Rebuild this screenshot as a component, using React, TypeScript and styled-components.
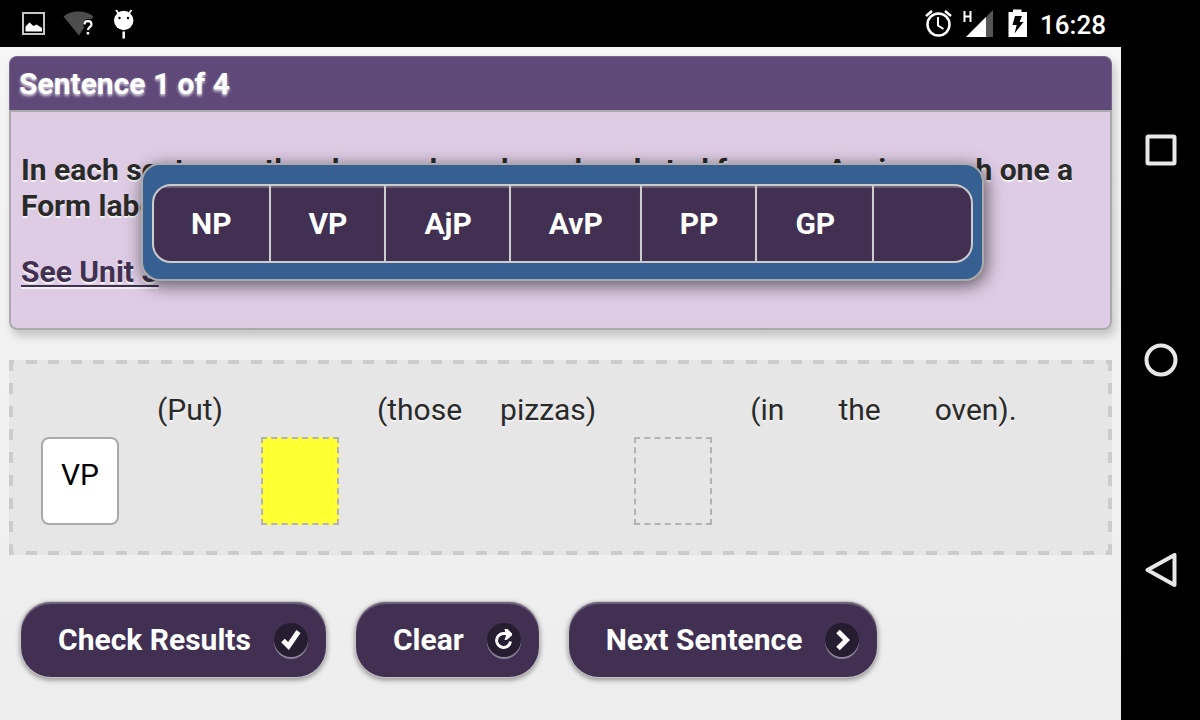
import React from "react";
import styled, { createGlobalStyle, css } from "styled-components";

const colors = {
  header: "#5f4979",
  panel: "#decce4",
  button: "#413051",
  blue: "#366092",
  line: "#cccccc",
  edge: "#aaaaaa",
};

const GlobalStyle = createGlobalStyle`
  * { box-sizing: border-box; }
  body {
    margin: 0;
    background: #000;
    font-family: Roboto, "Liberation Sans", sans-serif;
    font-size: 30px;
    line-height: 36px;
    color: #2a2a2a;
  }
  button { font: inherit; cursor: pointer; }
`;

const Device = styled.div`
  display: grid;
  grid-template-columns: minmax(0, 1fr) 79px;
  min-height: 100vh;
  background: #000;
`;

const Screen = styled.div`
  display: flex;
  flex-direction: column;
`;

const StatusBar = styled.header`
  display: flex;
  align-items: center;
  justify-content: space-between;
  height: 47px;
  padding: 0 15px 0 20px;
  color: #fff;
`;

const StatusGroup = styled.div`
  display: flex;
  align-items: center;
`;

const Clock = styled.time`
  margin-left: 10px;
  padding-top: 2px;
  font-size: 26px;
  font-weight: 500;
`;

const Page = styled.main`
  position: relative;
  flex: 1;
  padding: 9px 9px 40px;
  background: linear-gradient(#f6f6f6, #ededed);
`;

const Card = styled.section`
  border-radius: 8px;
  box-shadow: 3px 6px 10px rgba(0, 0, 0, 0.2);
`;

const CardTitle = styled.h1`
  margin: 0;
  padding: 9px 9px 8px;
  border: 1px solid #77658e;
  border-bottom: 0;
  border-radius: 8px 8px 0 0;
  background: ${colors.header};
  color: #fff;
  font-size: 30px;
  font-weight: 700;
  line-height: 36px;
  text-shadow: 0 2px 3px rgba(255, 255, 255, 0.8);
`;

const CardBody = styled.div`
  padding: 40px 10px 38px;
  border: 2px solid ${colors.edge};
  border-radius: 0 0 8px 8px;
  background: ${colors.panel};
  font-weight: 700;
  text-shadow: 0 2px 0 #f3f3f3;
`;

const Instructions = styled.p`
  margin: 0 0 30px;
`;

const UnitLink = styled.a`
  color: ${colors.button};
  text-decoration-thickness: 2px;
  text-underline-offset: 3px;
`;

const PopupFrame = styled.div`
  position: absolute;
  top: 116px;
  left: 141px;
  padding: 19px 9px 16px;
  border: 2px solid ${colors.edge};
  border-radius: 19px;
  background: ${colors.blue};
  box-shadow: 2px 4px 18px rgba(0, 0, 0, 0.6);
`;

const LabelGroup = styled.div`
  display: flex;
  overflow: hidden;
  border: 2px solid ${colors.line};
  border-radius: 19px;
  background: ${colors.button};
`;

const LabelButton = styled.button`
  min-width: 99px;
  height: 75px;
  padding: 0 37px 0 38px;
  border: 0;
  background: transparent;
  color: #fff;
  font-weight: 700;
  box-shadow: inset 0 2px 1px rgba(255, 255, 255, 0.25);

  & + & { border-left: 2px solid ${colors.line}; }
  &:first-child { padding-left: 37px; }
`;

const dashesX = `linear-gradient(90deg, ${colors.line} 5px, transparent 5px 17px, ${colors.line} 17px 28px, transparent 28px 39px, ${colors.line} 39px)`;
const dashesY = `linear-gradient(${colors.line} 11px, transparent 11px)`;

const SentenceBoard = styled.section`
  display: flex;
  align-items: flex-start;
  gap: 38px;
  min-height: 195px;
  margin-top: 30px;
  padding: 32px 32px 30px;
  background:
    ${dashesX} 0 0 / 45px 4px repeat-x,
    ${dashesX} 0 100% / 45px 4px repeat-x,
    ${dashesY} 0 0 / 4px 23px repeat-y,
    ${dashesY} 100% 0 / 4px 23px repeat-y,
    #e6e6e6;
`;

const Word = styled.span<{ $short?: boolean }>`
  padding-right: ${(p) => (p.$short ? 16 : 0)}px;
  text-shadow: 0 2px 0 #f3f3f3;
`;

const Slot = styled.button<{ $state: "filled" | "active" | "empty" }>`
  flex: none;
  width: 78px;
  height: 88px;
  margin-top: 45px;
  padding: 0 0 12px;
  border: 2px dashed #b3b3b3;
  background: transparent;
  color: #000;
  ${(p) => p.$state === "active" && css`background: #ffff33;`}
  ${(p) =>
    p.$state === "filled" &&
    css`
      border: 2px solid ${colors.edge};
      border-radius: 8px;
      background: #fff;
    `}
`;

const Actions = styled.div`
  display: flex;
  gap: 30px;
  padding: 47px 12px 0;
`;

const ActionButton = styled.button`
  display: flex;
  align-items: center;
  gap: 23px;
  height: 75px;
  padding: 0 18px 0 37px;
  border: 0;
  border-radius: 30px;
  background: ${colors.button};
  color: #fff;
  font-weight: 700;
  box-shadow:
    0 0 0 1px #c4c4c4,
    0 2px 5px 1px rgba(0, 0, 0, 0.4),
    inset 0 2px 1px rgba(255, 255, 255, 0.25);
`;

const IconDisc = styled.span`
  display: grid;
  place-items: center;
  width: 34px;
  height: 34px;
  border-radius: 50%;
  background: #271d31;
  box-shadow: 0 2px 0 rgba(255, 255, 255, 0.4);
`;

const NavBar = styled.nav`
  display: flex;
  flex-direction: column;
  align-items: center;
  justify-content: space-around;
  padding: 45px 0;
`;

const NavButton = styled.button`
  display: flex;
  padding: 0;
  border: 0;
  background: transparent;
`;

const StatusIcons = () => (
  <svg width="120" height="47" viewBox="20 0 120 47" aria-hidden="true">
    <rect x="23" y="13" width="21" height="21" fill="none" stroke="#c8c8c8" strokeWidth="2" />
    <path d="M25.500 31.500v-5l4-4 4 3.500 3-1.500 5.500 3.500v3.500z" fill="#fff" />
    <path d="M63.500 16.500c4-3.500 9-5 15-5s11 1.500 15 5l-2.500 3c-4-2-8 1-8 6l1.500 1.500-5.500 8.500z" fill="#4d4d4d" />
    <path d="M84.500 24.500c0-4.500 7-4.500 7 0 0 2.500-3.500 2.800-3.500 5.500" fill="none" stroke="#fff" strokeWidth="2.200" />
    <rect x="86.700" y="32" width="2.500" height="2.500" fill="#fff" />
    <circle cx="123.700" cy="20.500" r="9.700" fill="#fff" />
    <path d="M116 10l3 4M131.500 10l-3 4" stroke="#fff" strokeWidth="1.800" />
    <path d="M123.700 31.500v7" stroke="#fff" strokeWidth="2.500" />
    <circle cx="119.500" cy="18" r="1.200" />
    <circle cx="128" cy="18" r="1.200" />
  </svg>
);

const SystemIcons = () => (
  <svg width="106" height="47" viewBox="924 0 106 47" aria-hidden="true">
    <circle cx="938.500" cy="24.500" r="11" fill="none" stroke="#fff" strokeWidth="2.500" />
    <path d="M926 16l6-5M951 16l-6-5" stroke="#fff" strokeWidth="2.500" />
    <path d="M938 17v8.500l5.500 3.500" fill="none" stroke="#fff" strokeWidth="2" />
    <path d="M964.500 11v11M970.500 11v11M964.500 16.500h6" stroke="#fff" strokeWidth="2" />
    <path d="M966 37L993 10v27z" fill="#555" />
    <path d="M966 37l20-20v20z" fill="#fff" />
    <path d="M1008.500 12h4.500V9.500h8.500V12h5.500v25h-18.500z" fill="#fff" />
    <path d="M1015 16h7l-2.500 6h4l-9 11.500 2.200-8.500h-4.200z" />
  </svg>
);

const CheckIcon = () => (
  <svg width="22" height="22" viewBox="0 0 22 22" aria-hidden="true">
    <path d="M3 11.500l5.500 5.500L18.500 2.500" fill="none" stroke="#fff" strokeWidth="5" />
  </svg>
);

const RefreshIcon = () => (
  <svg width="22" height="22" viewBox="0 0 22 22" aria-hidden="true">
    <path d="M17.500 12.500a7 7 0 1 1-7-8h3" fill="none" stroke="#fff" strokeWidth="3" />
    <path d="M11.500 0h3l4.500 4.500v2l-5.500 4.500h-2l1.500-4.500z" fill="#fff" />
  </svg>
);

const ChevronIcon = () => (
  <svg width="22" height="22" viewBox="0 0 22 22" aria-hidden="true">
    <path d="M7 2.500l8.500 8.500L7 19.500" fill="none" stroke="#fff" strokeWidth="5" />
  </svg>
);

const labels = ["NP", "VP", "AjP", "AvP", "PP", "GP", ""];

export default function App() {
  return (
    <>
      <GlobalStyle />
      <Device>
        <Screen>
          <StatusBar>
            <StatusIcons />
            <StatusGroup>
              <SystemIcons />
              <Clock>16:28</Clock>
            </StatusGroup>
          </StatusBar>
          <Page>
            <Card>
              <CardTitle>Sentence 1 of 4</CardTitle>
              <CardBody>
                <Instructions>
                  In each sentence, the phrases have been bracketed for you. Assign each one a Form label.
                </Instructions>
                <UnitLink href="#unit">See Unit 3</UnitLink>
              </CardBody>
            </Card>
            <SentenceBoard>
              <Slot $state="filled">VP</Slot>
              <Word>(Put)</Word>
              <Slot $state="active" aria-label="Choose a label" />
              <Word>(those</Word>
              <Word>pizzas)</Word>
              <Slot $state="empty" aria-label="Choose a label" />
              <Word $short>(in</Word>
              <Word $short>the</Word>
              <Word>oven).</Word>
            </SentenceBoard>
            <Actions>
              <ActionButton>
                Check Results
                <IconDisc><CheckIcon /></IconDisc>
              </ActionButton>
              <ActionButton>
                Clear
                <IconDisc><RefreshIcon /></IconDisc>
              </ActionButton>
              <ActionButton>
                Next Sentence
                <IconDisc><ChevronIcon /></IconDisc>
              </ActionButton>
            </Actions>
            <PopupFrame>
              <LabelGroup role="group" aria-label="Form labels">
                {labels.map((label) => (
                  <LabelButton key={label} aria-label={label || "No label"}>
                    {label}
                  </LabelButton>
                ))}
              </LabelGroup>
            </PopupFrame>
          </Page>
        </Screen>
        <NavBar>
          <NavButton aria-label="Recent apps">
            <svg width="34" height="34" viewBox="0 0 34 34">
              <rect x="3.500" y="3.500" width="27" height="27" rx="1" fill="none" stroke="#e8e8e8" strokeWidth="4" />
            </svg>
          </NavButton>
          <NavButton aria-label="Home">
            <svg width="34" height="34" viewBox="0 0 34 34">
              <circle cx="17" cy="17" r="14.500" fill="none" stroke="#e8e8e8" strokeWidth="4" />
            </svg>
          </NavButton>
          <NavButton aria-label="Back">
            <svg width="34" height="34" viewBox="0 0 34 34">
              <path d="M3.500 17L30.500 2v30z" fill="none" stroke="#e8e8e8" strokeWidth="4" strokeLinejoin="round" />
            </svg>
          </NavButton>
        </NavBar>
      </Device>
    </>
  );
}
